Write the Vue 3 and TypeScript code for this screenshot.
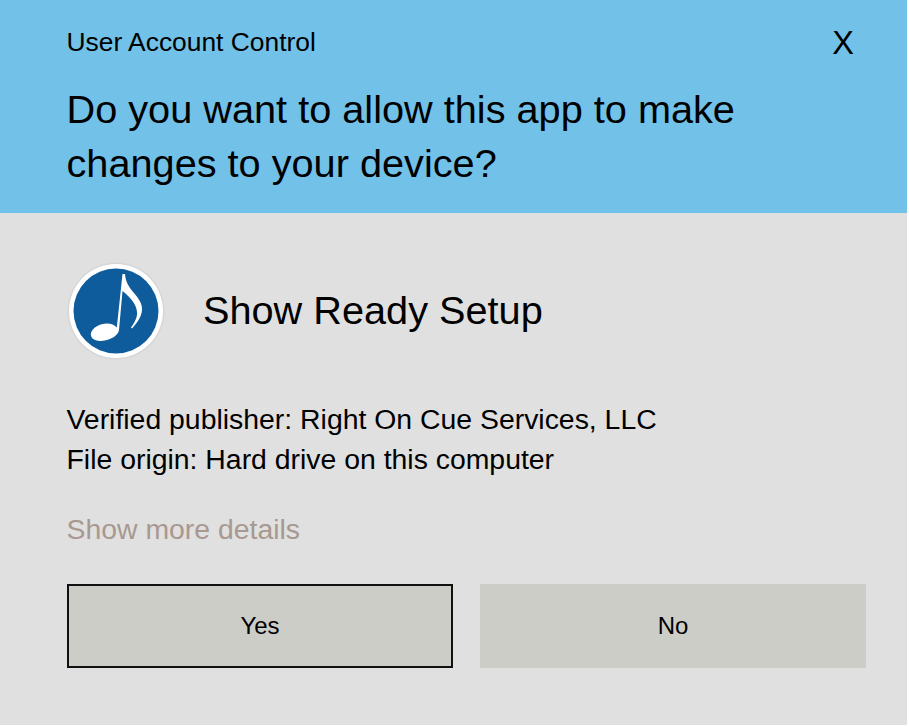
<script setup lang="ts">
const details: string[] = [
  'Verified publisher: Right On Cue Services, LLC',
  'File origin: Hard drive on this computer',
]
</script>

<template>
  <div class="dialog">
    <header class="head">
      <div class="top">
        <span class="label">User Account Control</span>
        <span class="close">X</span>
      </div>
      <h1 class="question">Do you want to allow this app to make changes to your device?</h1>
    </header>
    <main class="body">
      <div class="app">
        <svg class="icon" width="98" height="98" viewBox="0 0 98 98" aria-hidden="true">
          <circle cx="49" cy="49" r="48.5" fill="#d6d6d6" />
          <circle cx="49" cy="49" r="47" fill="#ffffff" />
          <circle cx="49" cy="49" r="42.5" fill="#0f5c9c" />
          <path fill="#ffffff" d="M55.500 12 L58 12 C58.500 20 62 25 67 31 C72 37 75.500 42 75 48 C74.500 55 70 61 65 66.500 L64 65.500 C68 60 70.500 55 70 50 C69.500 42 63 35 55.500 29 L52 68 C51.500 73 44 78.500 34 79 C27 79.300 23 75.500 24 71 C25.500 65.500 33 61.500 40 61.500 C44 61.500 47.500 63 49.800 65.500 Z" />
        </svg>
        <span class="name">Show Ready Setup</span>
      </div>
      <div class="details">
        <p v-for="line in details" :key="line">{{ line }}</p>
      </div>
      <div class="more">Show more details</div>
      <div class="actions">
        <button class="btn primary">Yes</button>
        <button class="btn">No</button>
      </div>
    </main>
  </div>
</template>

<style>
html, body { margin: 0; background: #ffffff; }
</style>

<style scoped>
.dialog {
  width: 907px;
  height: 725px;
  background: #e0e0e0;
  font-family: "Liberation Sans", Arial, sans-serif;
  color: #000;
  display: flex;
  flex-direction: column;
}
.head {
  height: 213px;
  box-sizing: border-box;
  background: #72c1e8;
  padding: 26px 53px 0 66.5px;
}
.top {
  display: flex;
  justify-content: space-between;
  align-items: center;
  height: 32px;
}
.label { font-size: 26.4px; line-height: 32px; }
.close { font-size: 32.5px; line-height: 32px; padding-top: 1px; }
.question {
  margin: 24px 0 0;
  font-size: 39.7px;
  font-weight: 400;
  line-height: 54px;
  width: 720px;
}
.body {
  flex: 1;
  padding: 49px 41px 0 67px;
}
.app {
  display: flex;
  align-items: center;
  gap: 38px;
}
.icon { display: block; flex: none; }
.name { font-size: 39.7px; line-height: 96px; margin-bottom: 2px; }
.details {
  margin: 39px 0 0 -0.5px;
  font-size: 28.4px;
  line-height: 40px;
}
.details p { margin: 0; }
.more {
  margin: 30px 0 0 -0.5px;
  font-size: 28.4px;
  line-height: 40px;
  color: #a89890;
}
.actions {
  display: flex;
  gap: 27px;
  margin-top: 35px;
}
.btn {
  width: 387px;
  height: 84px;
  box-sizing: border-box;
  background: #cdcdc8;
  border: 2px solid transparent;
  font-family: inherit;
  font-size: 24px;
  color: #000;
  padding: 0;
}
.btn.primary { border-color: #111; }
</style>
